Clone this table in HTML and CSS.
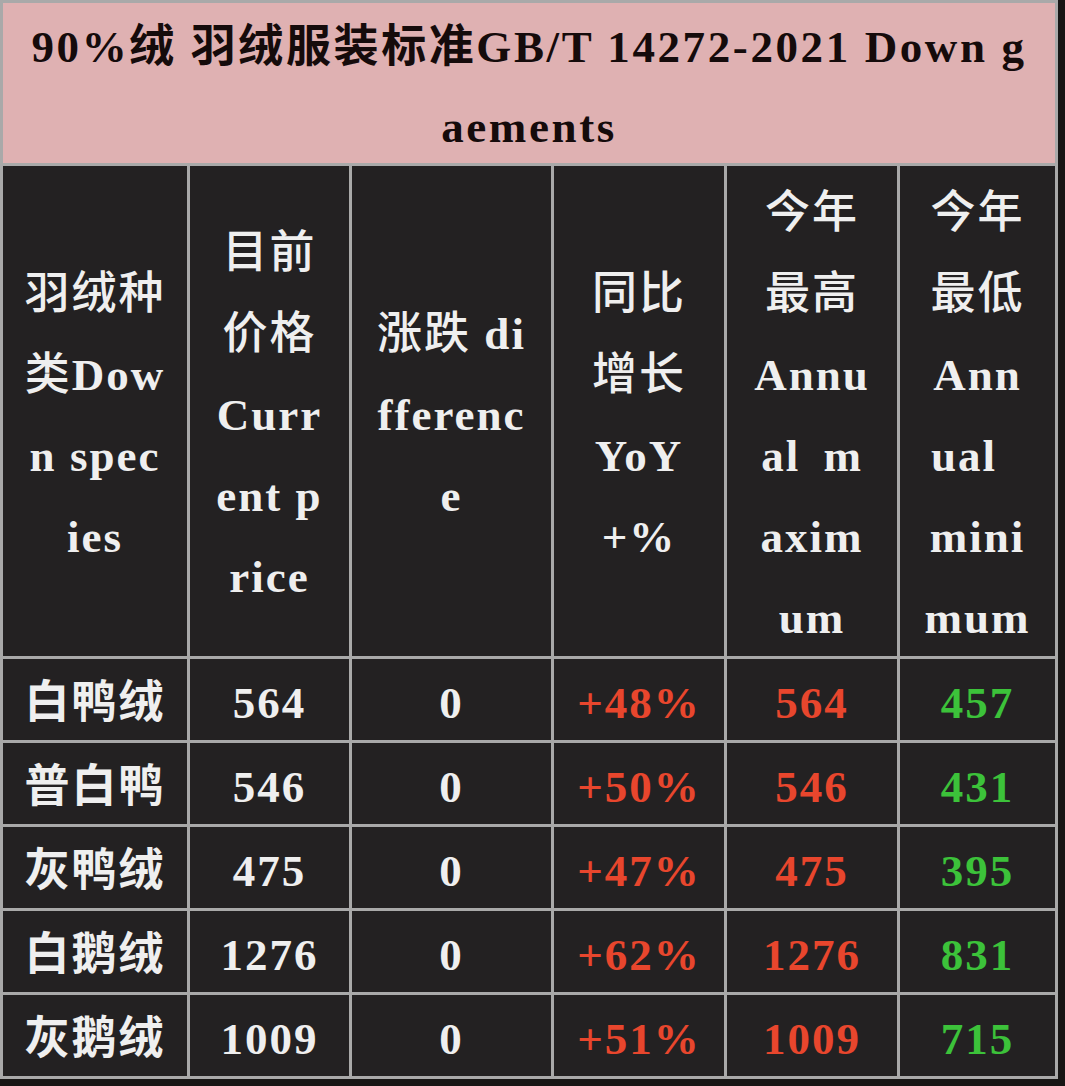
FILE: index.html
```html
<!DOCTYPE html>
<html lang="zh-CN">
<head>
<meta charset="utf-8">
<title>90%绒 羽绒服装标准</title>
<link rel="stylesheet" href="styles.css">
</head>
<body>
<div class="sheet">
  <div class="title">90%绒 羽绒服装标准GB/T 14272-2021 Down g<br>aements</div>

  <div class="head"><span><b class="zh">羽绒种</b></span><span><b class="zh">类</b>Dow</span><span>n spec</span><span>ies</span></div>
  <div class="head"><span><b class="zh">目前</b></span><span><b class="zh">价格</b></span><span>Curr</span><span>ent p</span><span>rice</span></div>
  <div class="head"><span><b class="zh">涨跌</b> di</span><span>fferenc</span><span>e</span></div>
  <div class="head"><span><b class="zh">同比</b></span><span><b class="zh">增长</b></span><span>YoY</span><span>+%</span></div>
  <div class="head"><span><b class="zh">今年</b></span><span><b class="zh">最高</b></span><span>Annu</span><span class="wide">al m</span><span>axim</span><span>um</span></div>
  <div class="head"><span><b class="zh">今年</b></span><span><b class="zh">最低</b></span><span>Ann</span><span class="start">ual</span><span>mini</span><span>mum</span></div>

  <div class="cell">白鸭绒</div><div class="cell">564</div><div class="cell">0</div><div class="cell up">+48%</div><div class="cell up">564</div><div class="cell down">457</div>
  <div class="cell">普白鸭</div><div class="cell">546</div><div class="cell">0</div><div class="cell up">+50%</div><div class="cell up">546</div><div class="cell down">431</div>
  <div class="cell">灰鸭绒</div><div class="cell">475</div><div class="cell">0</div><div class="cell up">+47%</div><div class="cell up">475</div><div class="cell down">395</div>
  <div class="cell">白鹅绒</div><div class="cell">1276</div><div class="cell">0</div><div class="cell up">+62%</div><div class="cell up">1276</div><div class="cell down">831</div>
  <div class="cell">灰鹅绒</div><div class="cell">1009</div><div class="cell">0</div><div class="cell up">+51%</div><div class="cell up">1009</div><div class="cell down">715</div>
</div>
</body>
</html>
```

FILE: styles.css
```css
html, body {
  margin: 0;
  padding: 0;
  background: #181615;
}

.sheet {
  display: grid;
  grid-template-columns: 184px 159px 199px 170px 170px 155px;
  grid-template-rows: 160px 490px repeat(5, 81px);
  gap: 3px;
  padding: 3px;
  width: fit-content;
  background: #a9a9a9;
  font-family: "Liberation Serif", "Noto Sans CJK SC", serif;
  font-weight: 700;
  font-size: 45px;
  letter-spacing: 2px;
}

.title {
  grid-column: 1 / -1;
  background: #dfb1b2;
  color: #150b0b;
  text-align: center;
  line-height: 80px;
  padding-top: 4px;
  letter-spacing: 2.6px;
  white-space: nowrap;
}

.head {
  background: #232122;
  color: #efefef;
  display: flex;
  flex-direction: column;
  justify-content: center;
  padding-top: 9px;
  line-height: 81px;
  text-align: center;
  white-space: nowrap;
}

.head .zh {
  font-family: "Noto Sans CJK SC", sans-serif;
  font-weight: 500;
  line-height: 1;
}

.head .wide {
  word-spacing: 10px;
}

.head .start {
  text-align: left;
  padding-left: 31px;
}

.cell {
  background: #232122;
  color: #efefef;
  text-align: center;
  line-height: 73px;
  padding-top: 8px;
  white-space: nowrap;
}

.up {
  color: #e8462d;
}

.down {
  color: #3cc23a;
}
```
